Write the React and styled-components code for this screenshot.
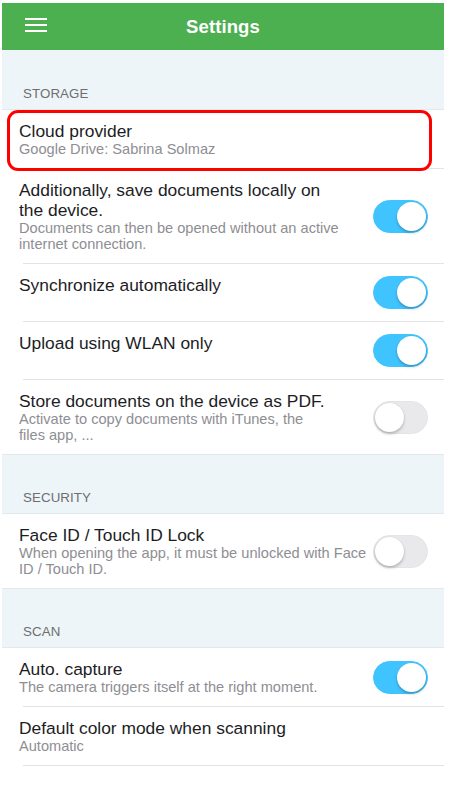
import React, { useState } from "react";
import styled, { createGlobalStyle } from "styled-components";

const GlobalStyle = createGlobalStyle`
  body {
    margin: 0;
    background: #ffffff;
    font-family: "Liberation Sans", Arial, sans-serif;
  }
`;

const Page = styled.div`
  width: 442px;
  margin: 3px 5px 0 2px;
  background: #ffffff;
`;

const Header = styled.div`
  height: 47px;
  background: #4caf50;
  display: flex;
  align-items: center;
  justify-content: center;
  position: relative;
`;

const MenuButton = styled.div`
  position: absolute;
  left: 23px;
  top: 15px;
  width: 22px;
  display: flex;
  flex-direction: column;
  gap: 4px;
  span {
    display: block;
    height: 2px;
    background: #ffffff;
  }
`;

const HeaderTitle = styled.div`
  color: #ffffff;
  font-size: 18.5px;
  font-weight: 700;
  letter-spacing: 0.1px;
`;

const SectionHead = styled.div`
  height: 60px;
  background: #eef5f8;
  border-top: ${(p) => (p.first ? "none" : "1px solid #e2e8eb")};
  border-bottom: 1px solid #e2e8eb;
  display: flex;
  align-items: flex-end;
  padding: 0 21px 8px;
  box-sizing: border-box;
  color: #6d6d72;
  font-size: 13.3px;
  letter-spacing: 0.1px;
`;

const Row = styled.div`
  position: relative;
  margin-left: 21px;
  padding: 11px 16px 11px 0;
  min-height: ${(p) => (p.tall ? "58px" : "0")};
  box-sizing: border-box;
  display: flex;
  align-items: center;
  border-bottom: ${(p) => (p.last ? "none" : "1px solid #e3e3e6")};
`;

const TextCol = styled.div`
  flex: 1;
  min-width: 0;
  margin-left: -4px;
  align-self: flex-start;
`;

const Title = styled.div`
  font-size: 17.4px;
  line-height: 20px;
  color: #1d1d1f;
  white-space: pre;
`;

const Sub = styled.div`
  font-size: 14.6px;
  line-height: 16px;
  color: #8e8e93;
  white-space: pre;
`;

const Highlight = styled.div`
  position: absolute;
  left: -16px;
  right: 12px;
  top: 0;
  bottom: -3px;
  border: 3px solid #ff0000;
  border-radius: 11px;
  pointer-events: none;
`;

const Track = styled.div`
  width: 55px;
  height: 33px;
  flex-shrink: 0;
  border-radius: 17px;
  box-sizing: border-box;
  background: ${(p) => (p.on ? "#40c4ff" : "#e9e9eb")};
  border: 1.5px solid ${(p) => (p.on ? "#40c4ff" : "#e4e4e6")};
  display: flex;
  align-items: center;
  justify-content: ${(p) => (p.on ? "flex-end" : "flex-start")};
  padding: 0 1px;
  cursor: pointer;
`;

const Knob = styled.div`
  width: 29px;
  height: 29px;
  border-radius: 50%;
  background: #ffffff;
  box-shadow: 0 2px 3px rgba(0, 0, 0, 0.22), 0 0 0 0.5px rgba(0, 0, 0, 0.06);
`;

function Toggle({ on, onClick }) {
  return (
    <Track on={on ? 1 : 0} onClick={onClick}>
      <Knob />
    </Track>
  );
}

const sections = [
  {
    name: "STORAGE",
    items: [
      { id: "cloud", title: "Cloud provider", sub: "Google Drive: Sabrina Solmaz", marked: true },
      {
        id: "local",
        title: "Additionally, save documents locally on\nthe device.",
        sub: "Documents can then be opened without an active\ninternet connection.",
        toggle: true,
      },
      { id: "sync", title: "Synchronize automatically", toggle: true },
      { id: "wlan", title: "Upload using WLAN only", toggle: true },
      {
        id: "pdf",
        title: "Store documents on the device as PDF.",
        sub: "Activate to copy documents with iTunes, the\nfiles app, ...",
        toggle: false,
      },
    ],
  },
  {
    name: "SECURITY",
    items: [
      {
        id: "faceid",
        title: "Face ID / Touch ID Lock",
        sub: "When opening the app, it must be unlocked with Face\nID / Touch ID.",
        toggle: false,
      },
    ],
  },
  {
    name: "SCAN",
    keepLastLine: true,
    items: [
      {
        id: "capture",
        title: "Auto. capture",
        sub: "The camera triggers itself at the right moment.",
        toggle: true,
      },
      { id: "color", title: "Default color mode when scanning", sub: "Automatic" },
    ],
  },
];

export default function App() {
  const init = {};
  sections.forEach((s) =>
    s.items.forEach((it) => {
      if (typeof it.toggle === "boolean") init[it.id] = it.toggle;
    })
  );
  const [values, setValues] = useState(init);

  return (
    <Page>
      <GlobalStyle />
      <Header>
        <MenuButton>
          <span />
          <span />
          <span />
        </MenuButton>
        <HeaderTitle>Settings</HeaderTitle>
      </Header>
      {sections.map((s, si) => (
        <div key={s.name}>
          <SectionHead first={si === 0 ? 1 : 0}>{s.name}</SectionHead>
          {s.items.map((it, i) => (
            <Row
              key={it.id}
              tall={1}
              last={i === s.items.length - 1 && !s.keepLastLine ? 1 : 0}
            >
              <TextCol>
                <Title>{it.title}</Title>
                {it.sub && <Sub>{it.sub}</Sub>}
              </TextCol>
              {typeof it.toggle === "boolean" && (
                <Toggle
                  on={values[it.id]}
                  onClick={() => setValues({ ...values, [it.id]: !values[it.id] })}
                />
              )}
              {it.marked && <Highlight />}
            </Row>
          ))}
        </div>
      ))}
    </Page>
  );
}
